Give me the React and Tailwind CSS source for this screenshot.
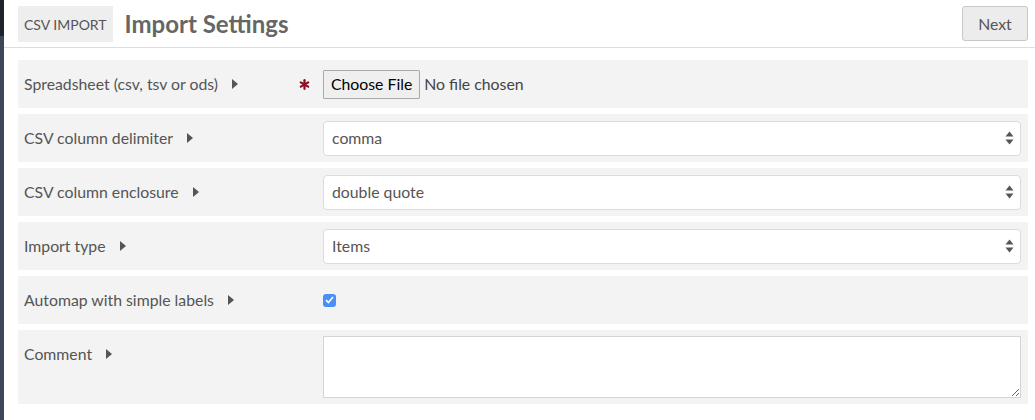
import { Asterisk } from 'lucide-react';

const font = { fontFamily: 'Lato, "Open Sans", sans-serif' };

function Caret() {
  return (
    <svg width="6" height="10" viewBox="0 0 6 10" className="ml-[14px] shrink-0">
      <path d="M0 0 L6 5 L0 10 Z" fill="#555" />
    </svg>
  );
}

function SelectBox({ value }) {
  return (
    <div className="flex-1 h-[35px] bg-white border border-[#dcdcdc] rounded-[4px] flex items-center justify-between pl-[8px] pr-[6px] text-[15.8px] text-[#555]">
      <span>{value}</span>
      <svg width="9" height="14" viewBox="0 0 9 14">
        <path d="M4.5 0.5 L8.5 5.5 L0.5 5.5 Z" fill="#555" />
        <path d="M0.5 8.5 L8.5 8.5 L4.5 13.5 Z" fill="#555" />
      </svg>
    </div>
  );
}

function Row({ label, tall, required, children }) {
  return (
    <div className={`flex items-start bg-[#f3f3f3] pl-[6px] pr-[7px] ${tall ? 'h-[74px] py-[6px]' : 'h-[48px] py-[7px]'}`}>
      <div className={`w-[272px] flex items-center text-[15.8px] text-[#555] ${tall ? 'h-[36px]' : 'h-[34px]'}`}>
        <span>{label}</span>
        <Caret />
      </div>
      <div className="w-[27px] h-[34px] flex items-center justify-start">
        {required && <Asterisk className="w-[17px] h-[17px] text-[#8e0d22]" strokeWidth={3.2} />}
      </div>
      <div className={`flex-1 flex items-center ${tall ? '' : 'h-[34px]'}`}>{children}</div>
    </div>
  );
}

export default function App() {
  return (
    <div className="flex w-[1035px] h-[420px] bg-white overflow-hidden" style={font}>
      {/* sidebar edge */}
      <div className="w-[4px] flex flex-col shrink-0">
        <div className="h-[36px] bg-[#1e222b]" />
        <div className="flex-1 bg-[#3e475a]" />
      </div>

      <div className="flex-1 flex flex-col">
        {/* Header */}
        <div className="h-[48px] border-b border-[#dddddd] flex items-start justify-between pl-[14px] pr-[7px] pt-[6px]">
          <div className="flex items-center">
            <div className="h-[36px] px-[6px] bg-[#eeeeee] flex items-center text-[14px] text-[#555]">CSV IMPORT</div>
            <h1 className="ml-[12px] text-[24px] font-bold text-[#666] leading-none">Import Settings</h1>
          </div>
          <button className="w-[66px] h-[35px] bg-[#ececec] border border-[#c8c8c8] rounded-[3px] text-[15.8px] text-[#555]">
            Next
          </button>
        </div>

        {/* Form */}
        <div className="flex flex-col gap-[6px] pl-[14px] pr-[7px] pt-[12px]">
          <Row label="Spreadsheet (csv, tsv or ods)" required>
            <div className="flex items-center text-[15.8px]">
              <div className="h-[29px] px-[7px] bg-[#efefef] border border-[#a9a9a9] rounded-[1px] flex items-center text-black">
                Choose File
              </div>
              <span className="ml-[4px] text-[#444]">No file chosen</span>
            </div>
          </Row>
          <Row label="CSV column delimiter">
            <SelectBox value="comma" />
          </Row>
          <Row label="CSV column enclosure">
            <SelectBox value="double quote" />
          </Row>
          <Row label="Import type">
            <SelectBox value="Items" />
          </Row>
          <Row label="Automap with simple labels">
            <div className="w-[13px] h-[13px] rounded-[3px] bg-[#4a8ff7] flex items-center justify-center">
              <svg width="9" height="8" viewBox="0 0 9 8">
                <path d="M1 4.2 L3.4 6.5 L8 1" stroke="white" strokeWidth="1.6" fill="none" />
              </svg>
            </div>
          </Row>
          <Row label="Comment" tall>
            <textarea className="flex-1 h-[62px] bg-white border border-[#d5d5d5] resize-y outline-none" />
          </Row>
        </div>
      </div>
    </div>
  );
}
